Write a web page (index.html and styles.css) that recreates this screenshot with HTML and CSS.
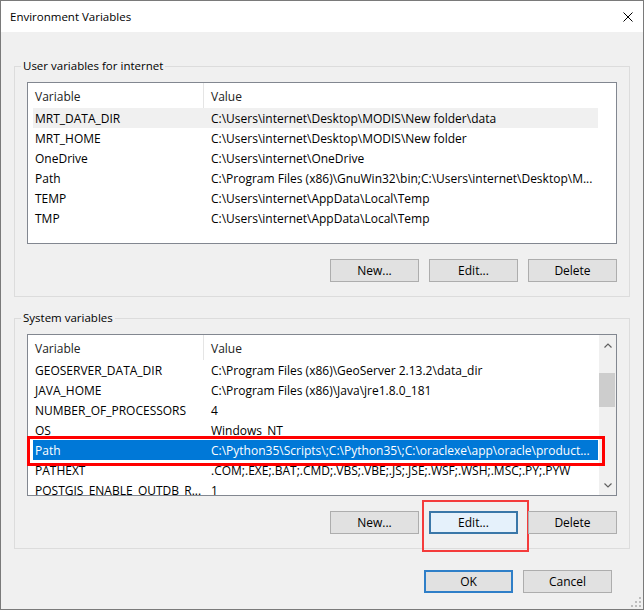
FILE: index.html
```html
<!DOCTYPE html>
<html lang="en">
    <head>
        <meta charset="UTF-8" />
        <meta name="viewport" content="width=device-width, initial-scale=1.0" />
        <title>Environment Variables</title>
        <link rel="stylesheet" href="styles.css">
    </head>
    <body>
        <div class="window">
            <div class="titlebar">
                <span class="title">Environment Variables</span>
                <svg class="close" width="10" height="10" viewBox="0 0 10 10">
                    <path d="M0.5 0.5 L9.5 9.5 M9.5 0.5 L0.5 9.5" stroke="#000" stroke-width="1" fill="none" />
                </svg>
            </div>

            <div class="content">
                <fieldset class="group">
                    <legend>User variables for internet</legend>
                    <div class="list">
                        <div class="list-body">
                            <div class="list-head"><span>Variable</span><span>Value</span></div>
                            <div class="row hot"><span>MRT_DATA_DIR</span><span>C:\Users\internet\Desktop\MODIS\New folder\data</span></div>
                            <div class="row"><span>MRT_HOME</span><span>C:\Users\internet\Desktop\MODIS\New folder</span></div>
                            <div class="row"><span>OneDrive</span><span>C:\Users\internet\OneDrive</span></div>
                            <div class="row"><span>Path</span><span>C:\Program Files (x86)\GnuWin32\bin;C:\Users\internet\Desktop\M...</span></div>
                            <div class="row"><span>TEMP</span><span>C:\Users\internet\AppData\Local\Temp</span></div>
                            <div class="row"><span>TMP</span><span>C:\Users\internet\AppData\Local\Temp</span></div>
                        </div>
                    </div>
                    <div class="actions">
                        <button>New...</button>
                        <button>Edit...</button>
                        <button>Delete</button>
                    </div>
                </fieldset>

                <fieldset class="group">
                    <legend>System variables</legend>
                    <div class="list">
                        <div class="list-body">
                            <div class="list-head"><span>Variable</span><span>Value</span></div>
                            <div class="row"><span>GEOSERVER_DATA_DIR</span><span>C:\Program Files (x86)\GeoServer 2.13.2\data_dir</span></div>
                            <div class="row"><span>JAVA_HOME</span><span>C:\Program Files (x86)\Java\jre1.8.0_181</span></div>
                            <div class="row"><span>NUMBER_OF_PROCESSORS</span><span>4</span></div>
                            <div class="row"><span>OS</span><span>Windows_NT</span></div>
                            <div class="row selected"><span>Path</span><span>C:\Python35\Scripts\;C:\Python35\;C:\oraclexe\app\oracle\product...</span></div>
                            <div class="row"><span>PATHEXT</span><span>.COM;.EXE;.BAT;.CMD;.VBS;.VBE;.JS;.JSE;.WSF;.WSH;.MSC;.PY;.PYW</span></div>
                            <div class="row"><span>POSTGIS_ENABLE_OUTDB_R...</span><span>1</span></div>
                        </div>
                        <div class="scrollbar">
                            <div class="arrow">
                                <svg width="8" height="5" viewBox="0 0 8 5"><path d="M0.5 4.5 L4 1 L7.5 4.5" stroke="#606060" stroke-width="1.2" fill="none" /></svg>
                            </div>
                            <div class="track"><div class="thumb"></div></div>
                            <div class="arrow">
                                <svg width="8" height="5" viewBox="0 0 8 5"><path d="M0.5 0.5 L4 4 L7.5 0.5" stroke="#606060" stroke-width="1.2" fill="none" /></svg>
                            </div>
                        </div>
                        <div class="mark path-mark"></div>
                    </div>
                    <div class="actions">
                        <button>New...</button>
                        <button class="hover marked">Edit...</button>
                        <button>Delete</button>
                    </div>
                </fieldset>
            </div>

            <div class="footer">
                <button class="default">OK</button>
                <button>Cancel</button>
            </div>

            <svg class="grip" width="10" height="10" viewBox="0 0 10 10">
                <rect x="8" y="0" width="2" height="2" fill="#bdbdbd" />
                <rect x="4" y="4" width="2" height="2" fill="#bdbdbd" />
                <rect x="8" y="4" width="2" height="2" fill="#bdbdbd" />
                <rect x="0" y="8" width="2" height="2" fill="#bdbdbd" />
                <rect x="4" y="8" width="2" height="2" fill="#bdbdbd" />
                <rect x="8" y="8" width="2" height="2" fill="#bdbdbd" />
            </svg>
        </div>
    </body>
</html>
```

FILE: styles.css
```css
* {
    margin: 0;
    padding: 0;
    box-sizing: border-box;
}

body {
    font-family: 'Segoe UI', 'Open Sans', sans-serif;
    font-size: 12px;
    color: #000;
    background-color: #fff;
}

.window {
    position: relative;
    width: 644px;
    height: 610px;
    border: 1px solid #7a7a7a;
    background-color: #f0f0f0;
}

.titlebar {
    display: flex;
    align-items: center;
    height: 31px;
    padding-left: 9px;
    background-color: #fff;
}

.title {
    font-size: 11.5px;
}

.close {
    margin-left: auto;
    margin-right: 10px;
}

.content {
    padding: 0 13px;
}

.group {
    border: 1px solid #dcdcdc;
    padding: 8px 12px 14px;
    margin-top: 13px;
}

.group:first-child {
    margin-top: 26px;
}

.group legend {
    margin-left: -6px;
    padding: 0 2px;
    font-size: 11.5px;
    line-height: 16px;
}

.list {
    position: relative;
    display: flex;
    height: 162px;
    border: 1px solid #828790;
    background-color: #fff;
}

.list-body {
    flex: 1;
    min-width: 0;
    overflow: hidden;
}

.list-head {
    display: grid;
    grid-template-columns: 176px 1fr;
    height: 25px;
    align-items: stretch;
    color: #222;
}

.list-head span {
    display: flex;
    align-items: center;
    padding: 1px 0 0 7px;
}

.list-head span:first-child {
    border-right: 1px solid #e5e5e5;
}

.row {
    display: grid;
    grid-template-columns: 172px 1fr;
    width: 565px;
    height: 20px;
    margin-left: 5px;
    line-height: 20px;
    white-space: nowrap;
}

.row span {
    overflow: hidden;
    padding-top: 1px;
}

.row span:first-child {
    padding-left: 2px;
}

.row span:last-child {
    padding-left: 6px;
}

.row.hot {
    background-color: #f0f0f0;
}

.row.selected {
    background-color: #0078d7;
    color: #fff;
}

.scrollbar {
    display: flex;
    flex-direction: column;
    width: 17px;
    background-color: #f0f0f0;
}

.scrollbar .arrow {
    display: flex;
    align-items: center;
    justify-content: center;
    height: 20px;
}

.scrollbar .track {
    flex: 1;
    padding: 18px 1px 0 0;
}

.thumb {
    height: 34px;
    background-color: #cdcdcd;
}

.mark {
    position: absolute;
    border: 3px solid #f00;
}

.path-mark {
    left: -1px;
    top: 101px;
    width: 578px;
    height: 30px;
}

.actions {
    display: flex;
    justify-content: flex-end;
    gap: 10px;
    margin-top: 15px;
}

button {
    position: relative;
    width: 89px;
    height: 23px;
    font-family: inherit;
    font-size: 12px;
    color: #000;
    background-color: #e1e1e1;
    border: 1px solid #adadad;
}

button.hover {
    background-color: #e5f1fb;
    border: 2px solid #3a77a8;
}

button.marked::after {
    content: '';
    position: absolute;
    left: -9px;
    top: -13px;
    width: 103px;
    height: 48px;
    border: 2px solid #f43b3b;
}

button.default {
    border: 2px solid #2f7fc8;
}

.footer {
    display: flex;
    justify-content: flex-end;
    gap: 10px;
    margin-top: 21px;
    padding-right: 31px;
}

.grip {
    position: absolute;
    right: 2px;
    bottom: 2px;
}
```
